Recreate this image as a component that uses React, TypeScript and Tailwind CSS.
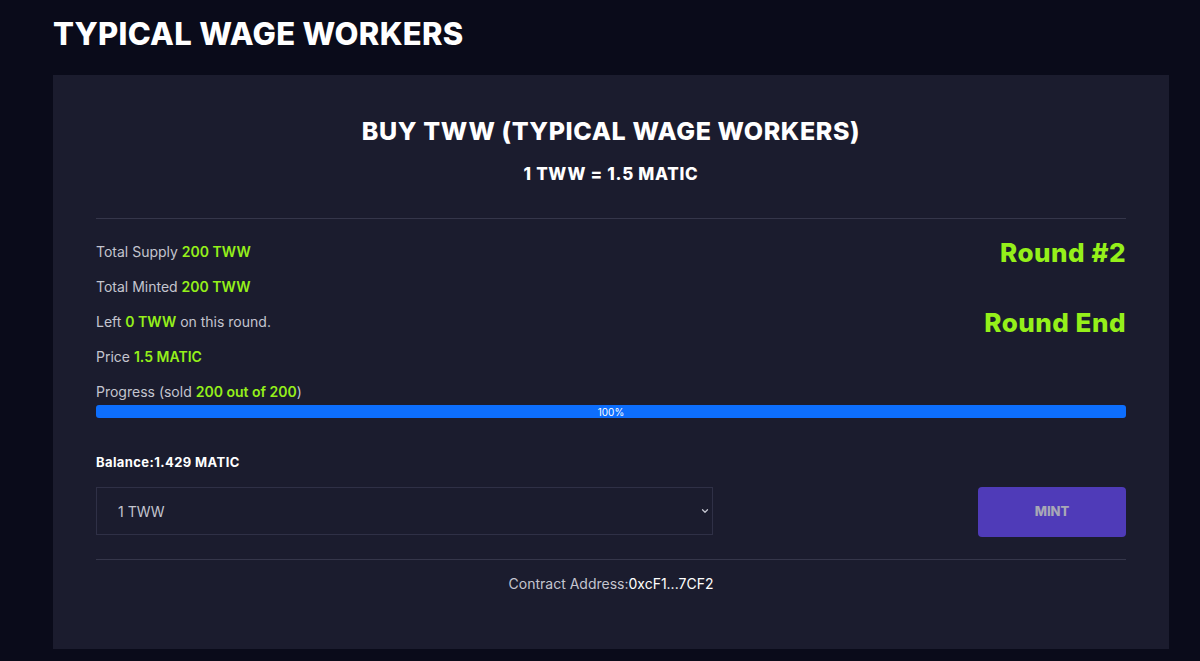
import React, { useState } from 'react';
import { ChevronDown } from 'lucide-react';

const display = { fontFamily: 'Inter, "DejaVu Sans", sans-serif' };

const Stat: React.FC<{ children: React.ReactNode }> = ({ children }) => (
  <div className="h-[35px] flex items-center text-[14px] text-[#c4c5cf]">{children}</div>
);

const G: React.FC<{ children: React.ReactNode }> = ({ children }) => (
  <span className="font-semibold text-[#95f01a]">{children}</span>
);

const App: React.FC = () => {
  const [amount, setAmount] = useState('1');
  const sold = 200;
  const total = 200;
  const pct = Math.round((sold / total) * 100);

  return (
    <div className="min-h-[661px] bg-[#0a0b1a] pl-[53px] pr-[31px] pt-[14px] pb-[13px]" style={{ fontFamily: 'Inter, "Liberation Sans", sans-serif' }}>
      <h1 className="text-[31px] leading-[40px] font-extrabold text-white tracking-[0.3px]" style={display}>
        TYPICAL WAGE WORKERS
      </h1>
      <div className="mt-[21px] bg-[#1b1c2e] px-[43px] pt-[40px] pb-[55px]">
        <div className="text-center">
          <h2 className="text-[25px] leading-[32px] font-extrabold text-white tracking-[0.6px]" style={display}>
            BUY TWW (TYPICAL WAGE WORKERS)
          </h2>
          <p className="mt-[17px] text-[17px] leading-[20px] font-extrabold text-white tracking-[0.7px]" style={display}>
            1 TWW = 1.5 MATIC
          </p>
        </div>
        <div className="mt-[34px] h-px bg-[#35364a]" />

        <div className="mt-[15px] flex justify-between">
          <div>
            <Stat>Total Supply&nbsp;<G>200 TWW</G></Stat>
            <Stat>Total Minted&nbsp;<G>200 TWW</G></Stat>
            <Stat>Left&nbsp;<G>0 TWW</G>&nbsp;on this round.</Stat>
            <Stat>Price&nbsp;<G>1.5 MATIC</G></Stat>
            <Stat>Progress (sold&nbsp;<G>200 out of 200</G>)</Stat>
          </div>
          <div className="text-right pt-[3px]">
            <div className="text-[26px] leading-[32px] font-extrabold text-[#95f01a] tracking-[0.5px]" style={display}>Round #2</div>
            <div className="mt-[38px] text-[26px] leading-[32px] font-extrabold text-[#95f01a] tracking-[0.5px]" style={display}>Round End</div>
          </div>
        </div>

        <div className="h-[13px] rounded-[3px] bg-[#2a2b3f] overflow-hidden -mt-[4px]">
          <div
            className="h-full bg-[#0d6efd] flex items-center justify-center text-[10px] leading-none text-white"
            style={{ width: `${pct}%` }}
          >
            {pct}%
          </div>
        </div>

        <div className="mt-[36px] text-[13px] leading-[16px] font-bold text-white tracking-[0.4px]" style={display}>
          Balance:1.429 MATIC
        </div>

        <div className="mt-[17px] flex justify-between items-start">
          <div className="relative w-[617px]">
            <select
              value={amount}
              onChange={e => setAmount(e.target.value)}
              className="appearance-none w-full h-[48px] bg-[#1b1c2e] border border-[#2f3046] text-[14px] text-[#c4c5cf] pl-[21px] outline-none"
            >
              <option value="1">1 TWW</option>
              <option value="2">2 TWW</option>
              <option value="3">3 TWW</option>
            </select>
            <ChevronDown className="absolute right-[3px] top-[19px] w-[10px] h-[10px] text-[#c4c5cf] pointer-events-none" strokeWidth={3} />
          </div>
          <button
            className="w-[148px] h-[50px] rounded-[4px] bg-[#4f3bb8] text-[13px] font-extrabold text-[#a8a8b6]"
            style={display}
          >
            MINT
          </button>
        </div>

        <div className="mt-[22px] h-px bg-[#35364a]" />
        <div className="mt-[13px] text-center text-[14px] text-[#c4c5cf]">
          Contract Address:<span className="text-white">0xcF1...7CF2</span>
        </div>
      </div>
    </div>
  );
};

export default App;
